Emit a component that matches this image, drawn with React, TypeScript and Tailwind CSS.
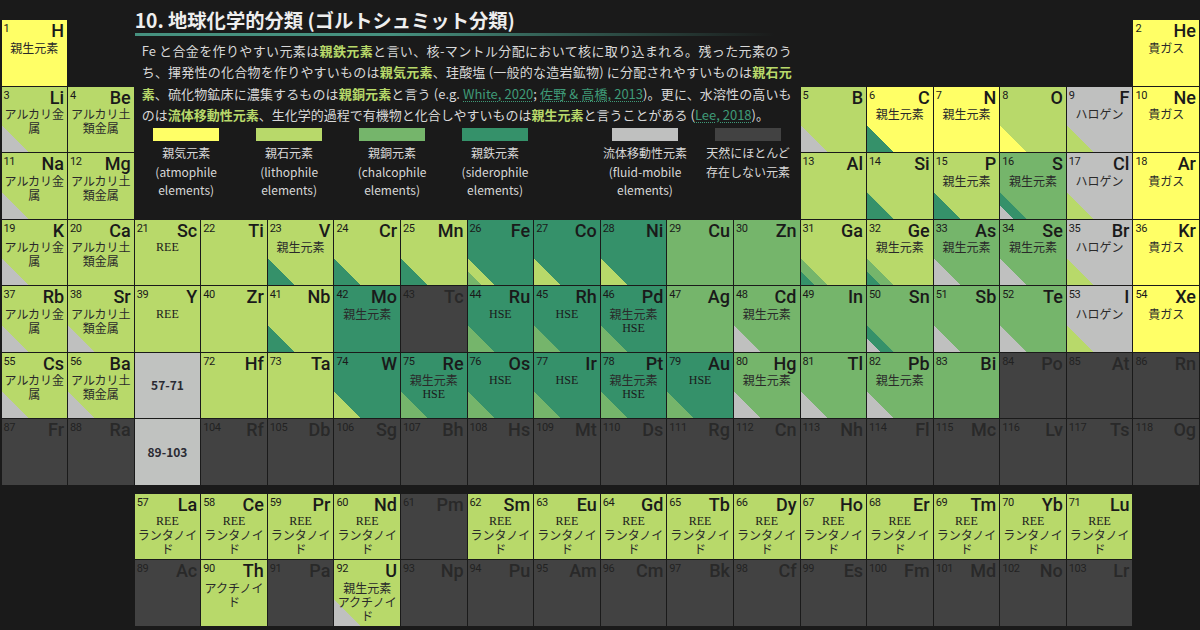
const SYMBOL_FONT = "font-['Roboto','Noto_Sans',sans-serif]";

const bgs = {
  y: "bg-[#ffff66]",
  ys: "bg-[linear-gradient(45deg,#35916a_20%,#ffff66_20.5%)]",
  l: "bg-[#b8d96a]",
  lg: "bg-[linear-gradient(45deg,#bfc0bf_20%,#b8d96a_20.5%)]",
  ly: "bg-[linear-gradient(45deg,#ffff66_20%,#b8d96a_20.5%)]",
  ls: "bg-[linear-gradient(45deg,#35916a_20%,#b8d96a_20.5%)]",
  lsc: "bg-[linear-gradient(45deg,#35916a_10%,#75b56b_10.5%,#75b56b_20%,#b8d96a_20.5%)]",
  c: "bg-[#75b56b]",
  cg: "bg-[linear-gradient(45deg,#bfc0bf_20%,#75b56b_20.5%)]",
  cgs: "bg-[linear-gradient(45deg,#bfc0bf_10%,#35916a_10.5%,#35916a_20%,#75b56b_20.5%)]",
  s: "bg-[#35916a]",
  sl: "bg-[linear-gradient(45deg,#b8d96a_20%,#35916a_20.5%)]",
  sc: "bg-[linear-gradient(45deg,#75b56b_20%,#35916a_20.5%)]",
  scl: "bg-[linear-gradient(45deg,#75b56b_10%,#b8d96a_10.5%,#b8d96a_20%,#35916a_20.5%)]",
  g: "bg-[#bfc0bf]",
  gl: "bg-[linear-gradient(45deg,#b8d96a_20%,#bfc0bf_20.5%)]",
  d: "bg-[#424242]",
};

type Bg = keyof typeof bgs;
type El = [number, string, Bg, string[]?];

const R = "親生元素";
const ALK = "アルカリ金属";
const ALE = "アルカリ土類金属";
const HAL = "ハロゲン";
const NOB = "貴ガス";
const LAN = "ランタノイド";
const ACT = "アクチノイド";

const row2: El[] = [
  [3, "Li", "lg", [ALK]], [4, "Be", "l", [ALE]],
  [5, "B", "lg"], [6, "C", "ys", [R]], [7, "N", "y", [R]], [8, "O", "ly"], [9, "F", "gl", [HAL]], [10, "Ne", "y", [NOB]],
];
const row3: El[] = [
  [11, "Na", "lg", [ALK]], [12, "Mg", "l", [ALE]],
  [13, "Al", "l"], [14, "Si", "ls"], [15, "P", "ls", [R]], [16, "S", "cgs", [R]], [17, "Cl", "gl", [HAL]], [18, "Ar", "y", [NOB]],
];
const row4: El[] = [
  [19, "K", "lg", [ALK]], [20, "Ca", "l", [ALE]], [21, "Sc", "l", ["REE"]], [22, "Ti", "l"], [23, "V", "ls", [R]], [24, "Cr", "ls"],
  [25, "Mn", "ls"], [26, "Fe", "scl"], [27, "Co", "sl"], [28, "Ni", "sl"], [29, "Cu", "c"], [30, "Zn", "c"],
  [31, "Ga", "lsc"], [32, "Ge", "lsc", [R]], [33, "As", "cg", [R]], [34, "Se", "cg", [R]], [35, "Br", "gl", [HAL]], [36, "Kr", "y", [NOB]],
];
const row5: El[] = [
  [37, "Rb", "lg", [ALK]], [38, "Sr", "lg", [ALE]], [39, "Y", "l", ["REE"]], [40, "Zr", "l"], [41, "Nb", "ls"], [42, "Mo", "s", [R]],
  [43, "Tc", "d"], [44, "Ru", "sc", ["HSE"]], [45, "Rh", "sc", ["HSE"]], [46, "Pd", "sc", [R, "HSE"]], [47, "Ag", "c"], [48, "Cd", "cg", [R]],
  [49, "In", "c"], [50, "Sn", "cgs"], [51, "Sb", "cg"], [52, "Te", "cg"], [53, "I", "gl", [HAL]], [54, "Xe", "y", [NOB]],
];
const row6a: El[] = [[55, "Cs", "lg", [ALK]], [56, "Ba", "lg", [ALE]]];
const row6b: El[] = [
  [72, "Hf", "l"], [73, "Ta", "l"], [74, "W", "sl"],
  [75, "Re", "sc", [R, "HSE"]], [76, "Os", "sc", ["HSE"]], [77, "Ir", "sc", ["HSE"]], [78, "Pt", "sc", [R, "HSE"]], [79, "Au", "sc", ["HSE"]], [80, "Hg", "cg", [R]],
  [81, "Tl", "cg"], [82, "Pb", "cg", [R]], [83, "Bi", "c"], [84, "Po", "d"], [85, "At", "d"], [86, "Rn", "d"],
];
const row7a: El[] = [[87, "Fr", "d"], [88, "Ra", "d"]];
const row7b: El[] = [
  [104, "Rf", "d"], [105, "Db", "d"], [106, "Sg", "d"], [107, "Bh", "d"], [108, "Hs", "d"], [109, "Mt", "d"], [110, "Ds", "d"], [111, "Rg", "d"],
  [112, "Cn", "d"], [113, "Nh", "d"], [114, "Fl", "d"], [115, "Mc", "d"], [116, "Lv", "d"], [117, "Ts", "d"], [118, "Og", "d"],
];
const lanth: El[] = ["La", "Ce", "Pr", "Nd", "Pm", "Sm", "Eu", "Gd", "Tb", "Dy", "Ho", "Er", "Tm", "Yb", "Lu"].map((s, i) =>
  s === "Pm" ? [61, s, "d"] : [57 + i, s, "l", ["REE", LAN]]
);
const actin: El[] = ["Ac", "Th", "Pa", "U", "Np", "Pu", "Am", "Cm", "Bk", "Cf", "Es", "Fm", "Md", "No", "Lr"].map((s, i) => {
  if (s === "Th") return [90, s, "l", [ACT]];
  if (s === "U") return [92, s, "lg", [R, ACT]];
  return [89 + i, s, "d"];
});

function Cell({ el }: { el: El }) {
  const [num, sym, bg, labels] = el;
  const dark = bg === "d";
  return (
    <div className={`h-[65.5px] overflow-hidden ${bgs[bg]}`}>
      <div className="flex h-[20.5px] items-start justify-between pl-[2px] pr-[3px]">
        <span className={`${SYMBOL_FONT} mt-[2px] text-[11px] leading-[14px] tracking-[-0.4px] ${dark ? "text-[#222222]" : "text-[#1a1a1a]"}`}>{num}</span>
        <span className={`${SYMBOL_FONT} text-[18px] leading-[22px] font-medium ${dark ? "text-[#292929]" : "text-[#1a1a1a]"}`}>{sym}</span>
      </div>
      {labels?.map((t) => (
        <div
          key={t}
          className={
            t === "REE" || t === "HSE"
              ? "text-center font-['Liberation_Serif',serif] text-[12px] leading-[14.2px] text-[#1a1a1a]"
              : "text-center font-['Noto_Sans_CJK_JP',sans-serif] text-[12px] leading-[14.2px] text-[#2a2a2a]"
          }
        >
          {t}
        </div>
      ))}
    </div>
  );
}

function RangeCell({ text }: { text: string }) {
  return (
    <div className="flex h-[65.5px] items-center justify-center bg-[#c0c2c0] font-['Noto_Sans_CJK_JP',sans-serif] text-[12px] font-bold text-[#2a2a33]">
      {text}
    </div>
  );
}

function Hi({ children }: { children: string }) {
  return <b className="font-bold text-[#b8d96a]">{children}</b>;
}

function Ref({ children }: { children: string }) {
  return <span className="text-[#3f9a78] underline decoration-dotted decoration-1 underline-offset-2">{children}</span>;
}

const legend = [
  ["bg-[#ffff66]", "親気元素", "(atmophile", "elements)"],
  ["bg-[#b8d96a]", "親石元素", "(lithophile", "elements)"],
  ["bg-[#75b56b]", "親銅元素", "(chalcophile", "elements)"],
  ["bg-[#35916a]", "親鉄元素", "(siderophile", "elements)"],
];
const legend2 = [
  ["bg-[#bfc0bf]", "流体移動性元素", "(fluid-mobile", "elements)"],
  ["bg-[#424242]", "天然にほとんど", "存在しない元素"],
];

function LegendItem({ item }: { item: string[] }) {
  const [swatch, ...lines] = item;
  return (
    <div className="flex w-[103px] flex-col items-center">
      <div className={`h-[13px] w-[66px] ${swatch}`} />
      <div className="mt-[3px] text-center text-[12px] leading-[18.6px] whitespace-nowrap text-[#d8d8d8]">
        {lines.map((l) => (
          <div key={l}>{l}</div>
        ))}
      </div>
    </div>
  );
}

function Info() {
  return (
    <div className="col-span-10 col-start-3 row-span-3 row-start-1 -mt-5 font-['Noto_Sans_CJK_JP',sans-serif] text-[#d8d8d8]">
      <h2 className="mt-[8px] text-[19.3px] leading-[25px] font-bold whitespace-nowrap text-[#eeeeee]">10. 地球化学的分類 (ゴルトシュミット分類)</h2>
      <div className="h-[3px] w-[640px] bg-[linear-gradient(90deg,#46917f,#46917f_40%,#1a1a1a)]" />
      <p className="mt-[4px] w-[657px] pl-[7px] text-justify text-[13px] leading-[21.3px]">
        Fe と合金を作りやすい元素は<Hi>親鉄元素</Hi>と言い、核-マントル分配において核に取り込まれる。残った元素のうち、揮発性の化合物を作りやすいものは<Hi>親気元素</Hi>、珪酸塩 (一般的な造岩鉱物) に分配されやすいものは<Hi>親石元素</Hi>、硫化物鉱床に濃集するものは<Hi>親銅元素</Hi>と言う (e.g. <Ref>White, 2020</Ref>; <Ref>佐野 & 高橋, 2013</Ref>)。更に、水溶性の高いものは<Hi>流体移動性元素</Hi>、生化学的過程で有機物と化合しやすいものは<Hi>親生元素</Hi>と言うことがある (<Ref>Lee, 2018</Ref>)。
      </p>
      <div className="mt-[3px] flex">
        {legend.map((item) => (
          <LegendItem key={item[1]} item={item} />
        ))}
        <div className="w-[47px]" />
        {legend2.map((item) => (
          <LegendItem key={item[1]} item={item} />
        ))}
      </div>
    </div>
  );
}

export default function App() {
  return (
    <div className="h-[630px] w-[1200px] overflow-hidden bg-[#1a1a1a] pt-5 pl-[1.5px]">
      <div className="grid w-[1197.5px] grid-cols-[repeat(18,minmax(0,1fr))] gap-px">
        <Info />
        <Cell el={[1, "H", "y", [R]]} />
        <div />
        <div className="col-start-18">
          <Cell el={[2, "He", "y", [NOB]]} />
        </div>
        {row2.map((e) => (
          <Cell key={e[0]} el={e} />
        ))}
        {row3.map((e) => (
          <Cell key={e[0]} el={e} />
        ))}
        {row4.map((e) => (
          <Cell key={e[0]} el={e} />
        ))}
        {row5.map((e) => (
          <Cell key={e[0]} el={e} />
        ))}
        {row6a.map((e) => (
          <Cell key={e[0]} el={e} />
        ))}
        <RangeCell text="57-71" />
        {row6b.map((e) => (
          <Cell key={e[0]} el={e} />
        ))}
        {row7a.map((e) => (
          <Cell key={e[0]} el={e} />
        ))}
        <RangeCell text="89-103" />
        {row7b.map((e) => (
          <Cell key={e[0]} el={e} />
        ))}
        <div className="col-span-full h-[7px]" />
        <div className="col-span-2" />
        {lanth.map((e) => (
          <Cell key={e[0]} el={e} />
        ))}
        <div />
        <div className="col-span-2" />
        {actin.map((e) => (
          <Cell key={e[0]} el={e} />
        ))}
      </div>
    </div>
  );
}
